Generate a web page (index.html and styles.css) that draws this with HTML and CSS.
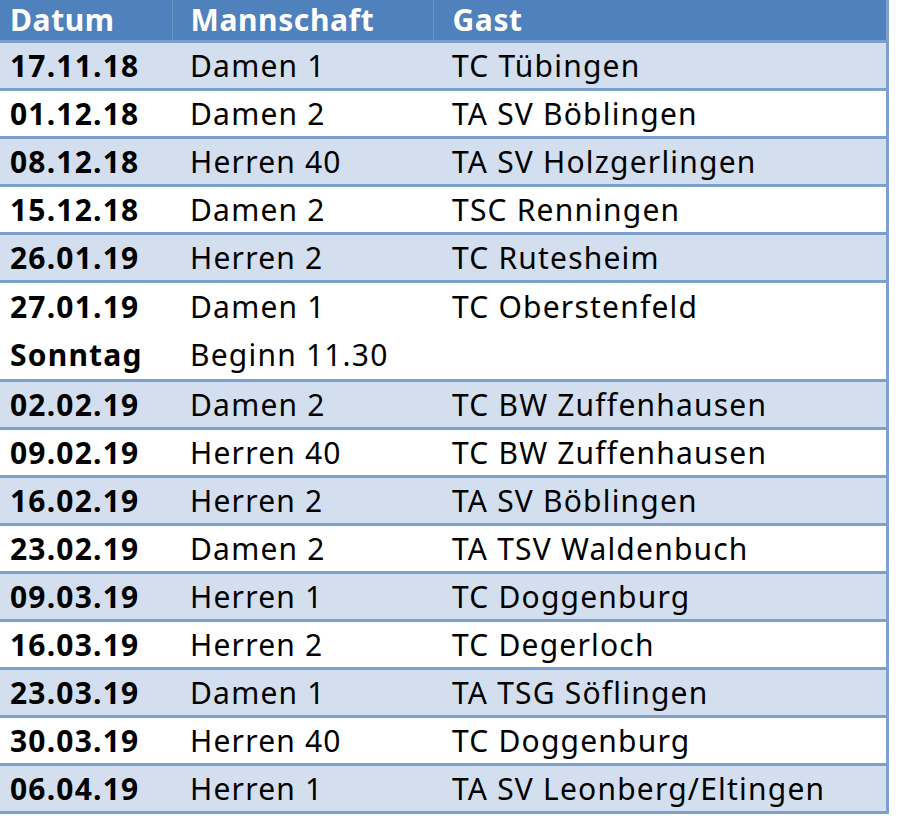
FILE: index.html
```html
<!DOCTYPE html>
<html lang="de">
<head>
<meta charset="utf-8">
<title>Spielplan</title>
<link rel="stylesheet" href="styles.css">
</head>
<body>
<table class="plan">
  <colgroup>
    <col class="c-date">
    <col class="c-team">
    <col class="c-guest">
  </colgroup>
  <thead>
    <tr><th class="date">Datum</th><th class="team">Mannschaft</th><th class="guest">Gast</th></tr>
  </thead>
  <tbody>
    <tr class="alt"><td class="date">17.11.18</td><td class="team">Damen 1</td><td class="guest">TC Tübingen</td></tr>
    <tr><td class="date">01.12.18</td><td class="team">Damen 2</td><td class="guest">TA SV Böblingen</td></tr>
    <tr class="alt"><td class="date">08.12.18</td><td class="team">Herren 40</td><td class="guest">TA SV Holzgerlingen</td></tr>
    <tr><td class="date">15.12.18</td><td class="team">Damen 2</td><td class="guest">TSC Renningen</td></tr>
    <tr class="alt"><td class="date">26.01.19</td><td class="team">Herren 2</td><td class="guest">TC Rutesheim</td></tr>
    <tr class="double"><td class="date">27.01.19<br>Sonntag</td><td class="team">Damen 1<br>Beginn 11.30</td><td class="guest">TC Oberstenfeld<br>&nbsp;</td></tr>
    <tr class="alt"><td class="date">02.02.19</td><td class="team">Damen 2</td><td class="guest">TC BW Zuffenhausen</td></tr>
    <tr><td class="date">09.02.19</td><td class="team">Herren 40</td><td class="guest">TC BW Zuffenhausen</td></tr>
    <tr class="alt"><td class="date">16.02.19</td><td class="team">Herren 2</td><td class="guest">TA SV Böblingen</td></tr>
    <tr><td class="date">23.02.19</td><td class="team">Damen 2</td><td class="guest">TA TSV Waldenbuch</td></tr>
    <tr class="alt"><td class="date">09.03.19</td><td class="team">Herren 1</td><td class="guest">TC Doggenburg</td></tr>
    <tr><td class="date">16.03.19</td><td class="team">Herren 2</td><td class="guest">TC Degerloch</td></tr>
    <tr class="alt"><td class="date">23.03.19</td><td class="team">Damen 1</td><td class="guest">TA TSG Söflingen</td></tr>
    <tr><td class="date">30.03.19</td><td class="team">Herren 40</td><td class="guest">TC Doggenburg</td></tr>
    <tr class="alt last"><td class="date">06.04.19</td><td class="team">Herren 1</td><td class="guest">TA SV Leonberg/Eltingen</td></tr>
  </tbody>
</table>
</body>
</html>
```
FILE: styles.css
```css
html, body {
  margin: 0;
  padding: 0;
  background: #ffffff;
}
body {
  font-family: "Noto Sans", Lato, sans-serif;
  color: #000;
}
.plan {
  border-collapse: collapse;
  width: 887px;
  table-layout: fixed;
  font-size: 30px;
  letter-spacing: 1.2px;
  border-right: 3px solid #7f9fcf;
}
.c-date { width: 172px; }
.c-team { width: 261px; }
.c-guest { width: 454px; }
.plan th, .plan td {
  padding: 0;
  text-align: left;
  vertical-align: middle;
  white-space: nowrap;
}
.plan th {
  background: #4f81bd;
  color: #fff;
  font-weight: 700;
  letter-spacing: 0.6px;
  height: 40px;
  line-height: 34px;
  border-left: 1px solid #6a93c6;
}
.plan th.date { border-left: none; }
.plan td {
  height: 45px;
  line-height: 45px;
  border-top: 3px solid #7ba0cd;
}
.plan tr.double td {
  line-height: 48px;
  height: 93px;
}
.plan tr.last td { border-bottom: 3px solid #7ba0cd; }
.plan tr.alt td { background: #d3dfee; }
.date { padding-left: 10px !important; font-weight: 700; }
.team { padding-left: 18px !important; }
.guest { padding-left: 19px !important; }
.plan tbody td.date { font-weight: 700; }
.plan tbody td.team, .plan tbody td.guest { font-weight: 400; }
```
